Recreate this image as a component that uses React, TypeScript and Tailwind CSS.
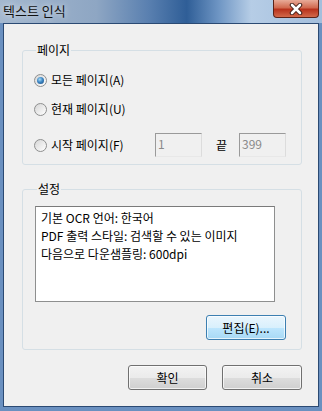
import React from "react";

const font = "font-['Noto_Sans_CJK_KR','Noto_Sans',sans-serif]";

function Radio(props: { checked?: boolean; label: string }) {
    return (
        <div className="flex items-center gap-[4px]">
            <div className="w-[13px] h-[13px] rounded-full border border-[#8e8f8f] bg-[linear-gradient(135deg,#d6d6d6,#ffffff)] flex items-center justify-center">
                {props.checked && (
                    <div className="w-[7px] h-[7px] rounded-full bg-[radial-gradient(circle_at_40%_35%,#a8dcf7_0%,#3d86c4_45%,#1b4a7c_100%)]" />
                )}
            </div>
            <span className="text-[12px] leading-[14px] text-black">{props.label}</span>
        </div>
    );
}

function DisabledInput(props: { value: string }) {
    return (
        <div className="w-[47px] h-[24px] border border-t-[#9a9a9a] border-l-[#9a9a9a] border-r-[#dcdcdc] border-b-[#e8e8e8] bg-[#f0f0f0] pl-[2px] pt-[3px] text-[12px] leading-[14px] text-[#8a8a8a]">
            {props.value}
        </div>
    );
}

function Button(props: { label: string; focused?: boolean; width: string }) {
    return (
        <div
            className={`${props.width} h-[25px] rounded-[3px] border ${props.focused
                ? "border-[#3c7fb1] bg-[linear-gradient(180deg,#eaf6fd_0%,#d9f0fc_50%,#bee6fd_51%,#a7d9f5_100%)]"
                : "border-[#707070] bg-[linear-gradient(180deg,#f2f2f2_0%,#ebebeb_50%,#dddddd_51%,#cfcfcf_100%)]"
                } shadow-[inset_0_0_0_1px_rgba(255,255,255,0.7)] flex items-center justify-center text-[12px] leading-[14px] text-black`}
        >
            {props.label}
        </div>
    );
}

export default function App() {
    return (
        <div className={`w-[322px] h-[411px] bg-[#6a90c0] flex flex-col ${font}`}>
            {/* title bar */}
            <div className="h-[23px] flex items-start justify-between bg-[linear-gradient(90deg,#a4b8cf_0%,#8ea6c3_30%,#5a80b0_46%,#2f5e97_58%,#6f96c4_68%,#b6cde6_78%,#a3bedc_100%)]">
                <span className="ml-[3px] mt-[3px] text-[13px] leading-[15px] text-[#111] [text-shadow:0_0_6px_rgba(255,255,255,0.9)]">
                    텍스트 인식
                </span>
                <div className="mr-[3px] w-[46px] h-[18px] rounded-b-[4px] border border-t-0 border-[#5a2218] bg-[linear-gradient(180deg,#e8ab98_0%,#d16a50_45%,#b8321c_55%,#d2694a_100%)] flex items-center justify-center">
                    <svg width="14" height="12" viewBox="0 0 14 12">
                        <path d="M3 2 L11 10 M11 2 L3 10" stroke="#3a1a14" strokeWidth="4.5" strokeLinecap="round" />
                        <path d="M3 2 L11 10 M11 2 L3 10" stroke="#ffffff" strokeWidth="2.6" strokeLinecap="round" />
                    </svg>
                </div>
            </div>

            {/* client */}
            <div className="mx-[3px] mb-[4px] flex-1 border border-[#2b4a73] bg-[#f0f0f0] pl-[18px] pr-[16px] pt-[19px] flex flex-col">
                <fieldset className="border border-[#d5dfe5] rounded-[3px] pl-[11px] pb-[7px]">
                    <legend className="ml-[2px] px-[1px] text-[12px] leading-[14px] text-black">페이지</legend>
                    <div className="mt-[13px] h-[20px] flex items-center">
                        <Radio checked label="모든 페이지(A)" />
                    </div>
                    <div className="mt-[9px] h-[20px] flex items-center">
                        <Radio label="현재 페이지(U)" />
                    </div>
                    <div className="mt-[14px] h-[24px] flex items-center">
                        <div className="w-[121px]">
                            <Radio label="시작 페이지(F)" />
                        </div>
                        <DisabledInput value="1" />
                        <span className="ml-[14px] mr-[12px] text-[12px] leading-[14px] text-black">끝</span>
                        <DisabledInput value="399" />
                    </div>
                </fieldset>

                <fieldset className="mt-[17px] border border-[#d5dfe5] rounded-[3px] pl-[12px] pr-[15px] pb-[9px] flex flex-col">
                    <legend className="ml-[2px] px-[1px] text-[12px] leading-[14px] text-black">설정</legend>
                    <div className="mt-[10px] w-[240px] h-[96px] border border-[#8e8f8f] border-t-[#7a7a7a] bg-white pl-[5px] pt-[2px] text-[12px] leading-[18px] text-black">
                        <div>기본 OCR 언어: 한국어</div>
                        <div>PDF 출력 스타일: 검색할 수 있는 이미지</div>
                        <div>다음으로 다운샘플링: 600dpi</div>
                    </div>
                    <div className="mt-[13px] flex justify-end">
                        <Button label="편집(E)..." focused width="w-[80px]" />
                    </div>
                </fieldset>

                <div className="mt-[15px] flex justify-end gap-[15px]">
                    <Button label="확인" width="w-[79px]" />
                    <Button label="취소" width="w-[80px]" />
                </div>
            </div>
        </div>
    );
}
